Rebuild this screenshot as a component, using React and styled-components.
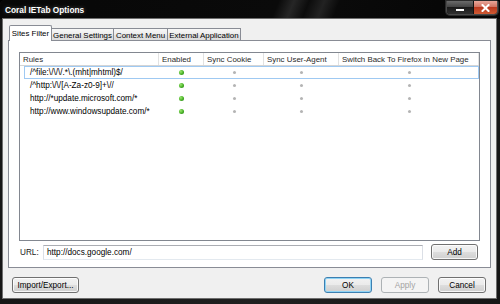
import React from 'react';
import styled, { createGlobalStyle, css } from 'styled-components';

const GlobalStyle = createGlobalStyle`
    html, body {
        margin: 0;
        padding: 0;
        background: #000;
    }
    * {
        box-sizing: border-box;
    }
`;

const Window = styled.div`
    display: flex;
    flex-direction: column;
    width: 500px;
    height: 304px;
    overflow: hidden;
    font-family: "Liberation Sans", Arial, sans-serif;
    font-size: 8.2px;
    color: #000;
    background: linear-gradient(90deg, #161616 0%, #202020 50%, #161616 100%);
    border-radius: 5px 5px 0 0;
`;

const TitleBar = styled.div`
    display: flex;
    align-items: flex-start;
    justify-content: space-between;
    height: 19px;
    padding: 0 3px 0 5px;
    background: linear-gradient(
        112deg,
        #070707 0%,
        #0a0a0a 55%,
        #262626 58%,
        #0c0c0c 61%,
        #222 64%,
        #0a0a0a 67%,
        #050505 100%
    );
`;

const Title = styled.span`
    margin-top: 5px;
    color: #fff;
    font-weight: bold;
    font-size: 8.3px;
    text-shadow: 0 0 4px rgba(255, 255, 255, 0.35);
`;

const CaptionGroup = styled.div`
    display: flex;
    margin-top: 1px;
    margin-right: -1px;
    border: 1px solid #4a4a4a;
    border-top: none;
    border-radius: 0 0 4px 4px;
    overflow: hidden;
    box-shadow: 0 0 0 1px rgba(255, 255, 255, 0.15);
`;

const CaptionButton = styled.div`
    display: flex;
    align-items: center;
    justify-content: center;
    width: ${p => p.$w}px;
    height: 13px;
    ${p => p.$close ? css`
        background: linear-gradient(#e8a69a 0%, #d27462 45%, #bb3a20 50%, #cf5a33 100%);
    ` : css`
        background: linear-gradient(#6a6a6a 0%, #444 45%, #1a1a1a 50%, #303030 100%);
        border-right: 1px solid #111;
    `}
`;

const MinDash = styled.span`
    width: 8px;
    height: 2px;
    margin-top: 5px;
    background: #fff;
`;

const Client = styled.div`
    display: flex;
    flex-direction: column;
    flex: 1;
    margin: 0 4px 6px 3px;
    padding: 6px 5px 5px 5px;
    background: #f0f0f0;
    box-shadow: 0 0 0 1px #6e6e6e;
`;

const TabStrip = styled.div`
    display: flex;
    align-items: flex-end;
    height: 15px;
    padding-left: 1px;
    position: relative;
    z-index: 1;
    font-size: 7.9px;
`;

const Tab = styled.div`
    display: flex;
    align-items: center;
    justify-content: center;
    width: ${p => p.$w}px;
    border: 1px solid #898c95;
    border-bottom: none;
    white-space: nowrap;
    ${p => p.$active ? css`
        height: 16px;
        margin-bottom: -1px;
        background: #fff;
        border-radius: 2px 2px 0 0;
    ` : css`
        height: 12px;
        margin-left: -1px;
        padding-top: 1px;
        background: linear-gradient(#f7f7f7 0%, #ececec 50%, #e2e2e2 51%, #dcdcdc 100%);
    `}
`;

const Panel = styled.div`
    display: flex;
    flex-direction: column;
    height: 228px;
    padding: 11px 10px 7px 10px;
    background: #fff;
    border: 1px solid #898c95;
`;

const ListBox = styled.div`
    display: flex;
    flex-direction: column;
    height: 189px;
    border: 1px solid #828790;
    background: #fff;
`;

const Columns = styled.div`
    display: grid;
    grid-template-columns: 139px 45px 60px 75px 1fr;
    align-items: center;
`;

const HeaderRow = styled(Columns)`
    height: 13px;
    border-bottom: 1px solid #d5d5d5;
    color: #2a2a2a;
    font-size: 7.9px;
`;

const HeaderCell = styled.div`
    height: 100%;
    display: flex;
    align-items: center;
    padding-left: 3px;
    border-right: 1px solid #e2e2e2;
    white-space: nowrap;
`;

const Row = styled(Columns)`
    position: relative;
    height: 13px;

    ${p => p.$focused && css`
        &::after {
            content: '';
            position: absolute;
            top: 0;
            bottom: 0;
            left: 4px;
            right: 0;
            border: 1px solid #9fc9f2;
        }
    `}
`;

const RuleCell = styled.div`
    padding-left: 10px;
    white-space: nowrap;
`;

const DotCell = styled.div`
    display: flex;
    justify-content: center;
    align-items: center;
`;

const Dot = styled.span`
    display: block;
    border-radius: 50%;
    ${p => p.$on ? css`
        width: 5px;
        height: 5px;
        background: radial-gradient(circle at 35% 35%, #9be870 0%, #46b024 55%, #23751a 100%);
    ` : css`
        width: 3px;
        height: 3px;
        background: #b4b4b4;
    `}
`;

const UrlRow = styled.div`
    display: flex;
    align-items: center;
    margin-top: 3px;
    height: 16px;
`;

const UrlLabel = styled.label`
    width: 24px;
    padding-left: 1px;
    color: #222;
`;

const TextInput = styled.div`
    display: flex;
    align-items: center;
    width: 380px;
    height: 15px;
    padding-left: 3px;
    border: 1px solid #dbdfe6;
    border-top-color: #abadb3;
    border-bottom-color: #e3e9ef;
    background: #fff;
`;

const Button = styled.button`
    display: flex;
    align-items: center;
    justify-content: center;
    width: ${p => p.$w || 48}px;
    height: 16px;
    padding: 0;
    font-family: inherit;
    font-size: 8.2px;
    color: #000;
    border: 1px solid #707070;
    border-radius: 3px;
    background: linear-gradient(#f2f2f2 0%, #ebebeb 48%, #dddddd 52%, #cfcfcf 100%);
    box-shadow: inset 0 0 0 1px rgba(255, 255, 255, 0.8);

    ${p => p.$default && css`
        border-color: #3c7fb1;
        box-shadow: inset 0 0 0 1px #8fd4f5;
    `}

    ${p => p.disabled && css`
        color: #a3a3a3;
        border-color: #adb2b5;
        background: #f4f4f4;
        box-shadow: none;
    `}
`;

const AddButton = styled(Button)`
    margin-left: 8px;
`;

const Footer = styled.div`
    display: flex;
    align-items: center;
    gap: 9px;
    margin-top: 9px;
    padding: 0 5px 0 4px;
`;

const Spacer = styled.div`
    flex: 1;
`;

const CloseGlyph = () => (
    <svg width="9" height="8" viewBox="0 0 9 8">
        <path d="M1.5 1 L7.5 7 M7.5 1 L1.5 7" stroke="#fff" strokeWidth="2" strokeLinecap="square" />
    </svg>
);

const rules = [
    '/^file:\\/\\/\\/.*\\.(mht|mhtml)$/',
    '/^http:\\/\\/[A-Za-z0-9]+\\//',
    'http://*update.microsoft.com/*',
    'http://www.windowsupdate.com/*',
];

const App = () => {
    return (
        <>
            <GlobalStyle />
            <Window>
                <TitleBar>
                    <Title>Coral IETab Options</Title>
                    <CaptionGroup>
                        <CaptionButton $w={27}><MinDash /></CaptionButton>
                        <CaptionButton $w={23} $close><CloseGlyph /></CaptionButton>
                    </CaptionGroup>
                </TitleBar>
                <Client>
                    <TabStrip>
                        <Tab $w={43} $active>Sites Filter</Tab>
                        <Tab $w={63}>General Settings</Tab>
                        <Tab $w={55}>Context Menu</Tab>
                        <Tab $w={74}>External Application</Tab>
                    </TabStrip>
                    <Panel>
                        <ListBox>
                            <HeaderRow>
                                <HeaderCell>Rules</HeaderCell>
                                <HeaderCell>Enabled</HeaderCell>
                                <HeaderCell>Sync Cookie</HeaderCell>
                                <HeaderCell>Sync User-Agent</HeaderCell>
                                <HeaderCell>Switch Back To Firefox in New Page</HeaderCell>
                            </HeaderRow>
                            {rules.map((rule, i) => (
                                <Row key={rule} $focused={i === 0}>
                                    <RuleCell>{rule}</RuleCell>
                                    <DotCell><Dot $on /></DotCell>
                                    <DotCell><Dot /></DotCell>
                                    <DotCell><Dot /></DotCell>
                                    <DotCell><Dot /></DotCell>
                                </Row>
                            ))}
                        </ListBox>
                        <UrlRow>
                            <UrlLabel>URL:</UrlLabel>
                            <TextInput>http://docs.google.com/</TextInput>
                            <AddButton $w={47}>Add</AddButton>
                        </UrlRow>
                    </Panel>
                    <Footer>
                        <Button $w={67}>Import/Export...</Button>
                        <Spacer />
                        <Button $default>OK</Button>
                        <Button disabled>Apply</Button>
                        <Button>Cancel</Button>
                    </Footer>
                </Client>
            </Window>
        </>
    );
};

export default App;
